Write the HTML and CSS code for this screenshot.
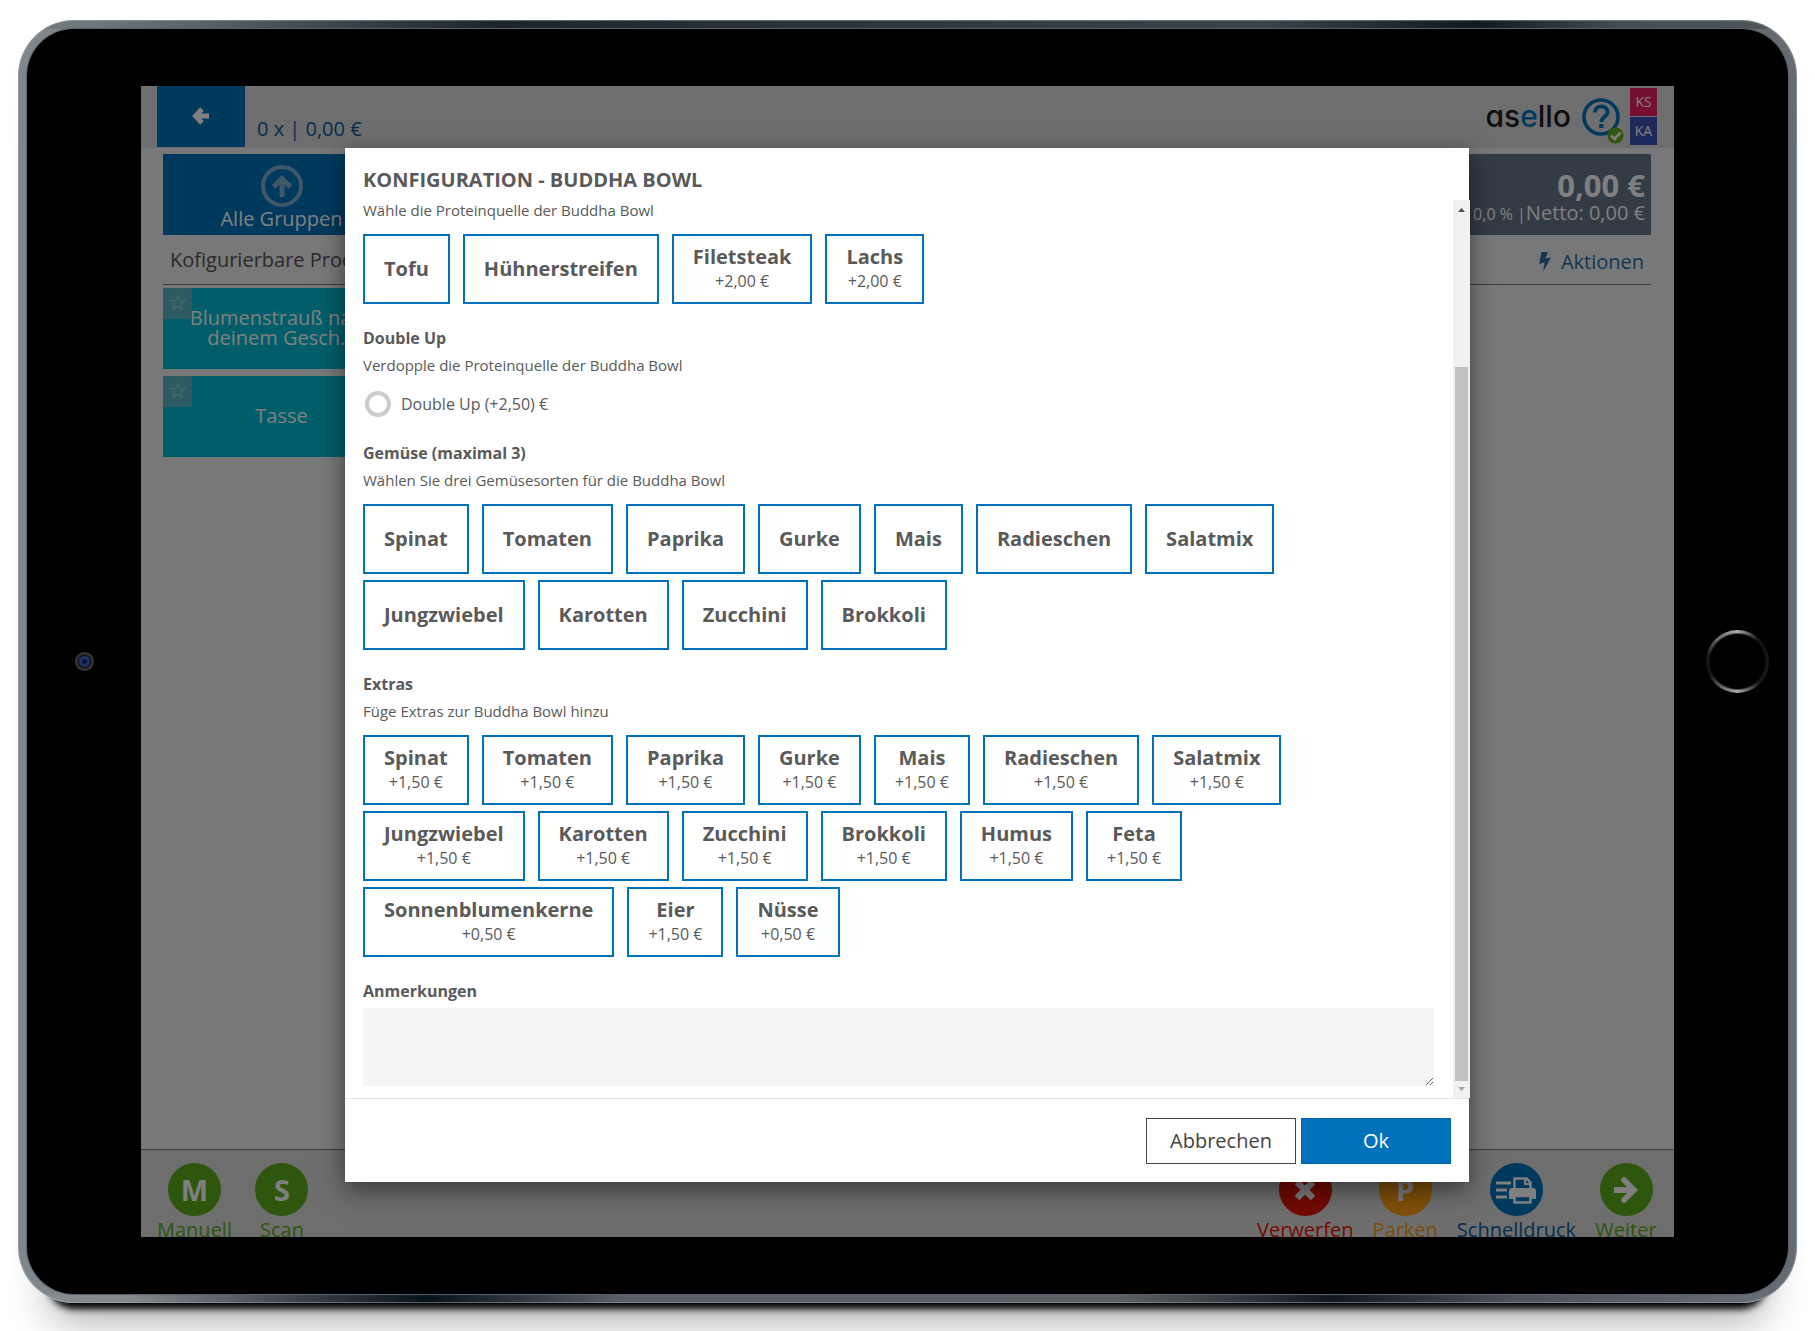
FILE: index.html
```html
<!DOCTYPE html>
<html lang="de">
<head>
    <meta charset="UTF-8">
    <title>asello - Konfiguration</title>
    <link rel="stylesheet" href="styles.css">
</head>
<body>
<div class="device">
    <div class="bezel">
        <div class="camera"></div>
        <div class="screen">
            <header class="topbar">
                <button class="back" aria-label="Zurück">
                    <svg width="18" height="18" viewBox="0 0 18 18"><path d="M10 2 3.500 9l6.500 7M4 9h13" fill="none" stroke="#fff" stroke-width="5"/></svg>
                </button>
                <span class="cart">0 x | 0,00 €</span>
                <div class="logo">as<span>e</span>llo</div>
                <button class="help" aria-label="Hilfe">
                    <svg width="42" height="46" viewBox="0 0 42 46">
                        <circle cx="19" cy="19" r="17" fill="none" stroke="#0072bc" stroke-width="3.6"/>
                        <path d="M13 14.500c0-8 12.500-8 12.500-.5 0 5-6.200 4.500-6.200 10" fill="none" stroke="#0072bc" stroke-width="3.800"/>
                        <rect x="17.200" y="26" width="4.200" height="4" fill="#0072bc"/>
                        <circle cx="33.500" cy="37.500" r="8" fill="#5eac1a"/>
                        <path d="m29 37.500 3.500 3.500 6-6.500" fill="none" stroke="#fff" stroke-width="2.800"/>
                    </svg>
                </button>
                <div class="users">
                    <span class="user ks">KS</span>
                    <span class="user ka">KA</span>
                </div>
            </header>
            <main class="main">
                <section class="products">
                    <button class="tile group">
                        <svg width="42" height="42" viewBox="0 0 42 42">
                            <circle cx="21" cy="21" r="19" fill="none" stroke="#7fb0d0" stroke-width="4"/>
                            <path d="M12.500 22 21 13.500l8.500 8.500M21 15v17" fill="none" stroke="#7fb0d0" stroke-width="5"/>
                        </svg>
                        Alle Gruppen
                    </button>
                    <h2 class="bar">Kofigurierbare Produkte</h2>
                    <button class="tile"><span class="star">☆</span>Blumenstrauß nach<br>deinem Gesch...</button>
                    <button class="tile"><span class="star">☆</span>Tasse</button>
                </section>
                <section class="receipt">
                    <div class="total">
                        <strong>0,00 €</strong>
                        <div><small>0,0 % |</small>Netto: 0,00 €</div>
                    </div>
                    <div class="bar actions">
                        <svg width="12" height="20" viewBox="0 0 12 20"><path d="M2.500 0H9L6.500 6.500 12 5.500 4 20l1.500-9.500L0 12z" fill="#2a6fa8"/></svg>
                        <a href="#">Aktionen</a>
                    </div>
                </section>
            </main>
            <footer class="toolbar">
                <button class="tool green"><span class="circle">M</span>Manuell</button>
                <button class="tool green"><span class="circle">S</span>Scan</button>
                <span class="space"></span>
                <button class="tool red"><span class="circle"><svg width="24" height="24" viewBox="0 0 24 24"><path d="m4 4 16 16M20 4 4 20" stroke="#fff" stroke-width="6.500"/></svg></span>Verwerfen</button>
                <button class="tool orange"><span class="circle">P</span>Parken</button>
                <button class="tool blue"><span class="circle">
                    <svg width="42" height="28" viewBox="0 0 42 28">
                        <path d="M1 7h15M1 14h11M1 21h11" stroke="#fff" stroke-width="3"/>
                        <path d="M19.500 13V2.500h12l4 4V13" fill="none" stroke="#fff" stroke-width="2.500"/>
                        <path d="M30 2v6h6" fill="none" stroke="#fff" stroke-width="2"/>
                        <path d="M17 12h21q3 0 3 3v8H14v-8q0-3 3-3z" fill="#fff"/>
                        <path d="M19.500 20h16v6.500h-16z" fill="#0072bc" stroke="#fff" stroke-width="2.500"/>
                    </svg></span>Schnelldruck</button>
                <button class="tool green"><span class="circle"><svg width="26" height="26" viewBox="0 0 26 26"><path d="m11 3 10 10-10 10" fill="none" stroke="#fff" stroke-width="5.500" stroke-linecap="round"/><path d="M1 13h19" stroke="#fff" stroke-width="6"/></svg></span>Weiter</button>
            </footer>

            <div class="overlay">
                <form class="modal">
                    <h1>Konfiguration - Buddha Bowl</h1>
                    <div class="scroll">
                        <div class="content">
                            <fieldset>
                                <p>Wähle die Proteinquelle der Buddha Bowl</p>
                                <div class="options">
                                    <button type="button">Tofu</button>
                                    <button type="button">Hühnerstreifen</button>
                                    <button type="button">Filetsteak<small>+2,00 €</small></button>
                                    <button type="button">Lachs<small>+2,00 €</small></button>
                                </div>
                            </fieldset>
                            <fieldset>
                                <h3>Double Up</h3>
                                <p>Verdopple die Proteinquelle der Buddha Bowl</p>
                                <label class="radio"><input type="radio" name="double">Double Up (+2,50) €</label>
                            </fieldset>
                            <fieldset>
                                <h3>Gemüse (maximal 3)</h3>
                                <p>Wählen Sie drei Gemüsesorten für die Buddha Bowl</p>
                                <div class="options">
                                    <button type="button">Spinat</button>
                                    <button type="button">Tomaten</button>
                                    <button type="button">Paprika</button>
                                    <button type="button">Gurke</button>
                                    <button type="button">Mais</button>
                                    <button type="button">Radieschen</button>
                                    <button type="button">Salatmix</button>
                                    <button type="button">Jungzwiebel</button>
                                    <button type="button">Karotten</button>
                                    <button type="button">Zucchini</button>
                                    <button type="button">Brokkoli</button>
                                </div>
                            </fieldset>
                            <fieldset>
                                <h3>Extras</h3>
                                <p>Füge Extras zur Buddha Bowl hinzu</p>
                                <div class="options">
                                    <button type="button">Spinat<small>+1,50 €</small></button>
                                    <button type="button">Tomaten<small>+1,50 €</small></button>
                                    <button type="button">Paprika<small>+1,50 €</small></button>
                                    <button type="button">Gurke<small>+1,50 €</small></button>
                                    <button type="button">Mais<small>+1,50 €</small></button>
                                    <button type="button">Radieschen<small>+1,50 €</small></button>
                                    <button type="button">Salatmix<small>+1,50 €</small></button>
                                    <button type="button">Jungzwiebel<small>+1,50 €</small></button>
                                    <button type="button">Karotten<small>+1,50 €</small></button>
                                    <button type="button">Zucchini<small>+1,50 €</small></button>
                                    <button type="button">Brokkoli<small>+1,50 €</small></button>
                                    <button type="button">Humus<small>+1,50 €</small></button>
                                    <button type="button">Feta<small>+1,50 €</small></button>
                                    <button type="button">Sonnenblumenkerne<small>+0,50 €</small></button>
                                    <button type="button">Eier<small>+1,50 €</small></button>
                                    <button type="button">Nüsse<small>+0,50 €</small></button>
                                </div>
                            </fieldset>
                            <label class="notes-label" for="notes">Anmerkungen</label>
                            <textarea id="notes" class="notes"></textarea>
                        </div>
                        <div class="scrollbar">
                            <svg width="17" height="17" viewBox="0 0 17 17"><path d="M5 12h7L8.500 8z" fill="#505050"/></svg>
                            <div class="track"><div class="thumb"></div></div>
                            <svg width="17" height="17" viewBox="0 0 17 17"><path d="M5 6h7l-3.500 4z" fill="#a3a3a3"/></svg>
                        </div>
                    </div>
                    <div class="modal-footer">
                        <button type="button" class="btn">Abbrechen</button>
                        <button type="button" class="btn primary">Ok</button>
                    </div>
                </form>
            </div>
        </div>
        <div class="home"></div>
    </div>
</div>
</body>
</html>
```
FILE: styles.css
```css
*{
    margin: 0;
    padding: 0;
    box-sizing: border-box;
}
body{
    min-height: 100vh;
    padding: 20px 18px 28px;
    display: flex;
    font-family: "Open Sans", "Noto Sans", sans-serif;
    font-size: 20px;
    font-weight: 400;
    line-height: 24px;
    background: #fff;
    overflow: hidden;
}
button{
    font: inherit;
    border: none;
    background: none;
    cursor: pointer;
}
/* tablet */
.device{
    flex: 1;
    display: flex;
    padding: 9px;
    border-radius: 56px;
    background:
        linear-gradient(90deg, #70787c 4%, #1c2428 27%, #30383c 50%, #3c4448 70%, #10181c 82%, #464d51 90%, #50575b) top / 100% 9px no-repeat,
        linear-gradient(90deg, #858b8f 6%, #3a4148 16%, #06121a 23%, #5a6068 34%, #5a6064 62%, #10181e 74%, #4c5258 84%, #6a7078) bottom / 100% 9px no-repeat,
        linear-gradient(90deg, #80878c 50%, #666b71 50%);
    box-shadow: inset 0 0 1px 1px rgba(170, 176, 180, .5), 0 36px 7px -30px #000, 0 50px 40px -30px rgba(0, 0, 0, .3);
}
.bezel{
    flex: 1;
    display: grid;
    grid-template-columns: 114px 1fr 114px;
    align-items: center;
    justify-items: center;
    padding: 57px 0;
    border-radius: 47px;
    background: #000;
    box-shadow: 0 0 1px 1px #5a626a;
}
.camera{
    width: 19px;
    height: 19px;
    border-radius: 50%;
    background: radial-gradient(circle, #0a1020 10%, #203c80 30%, #15151a 45%, #333 60%, #555);
}
.home{
    width: 63px;
    height: 63px;
    margin-left: 12px;
    border-radius: 50%;
    background: radial-gradient(circle, #000 27px, transparent 29px), conic-gradient(#aaa, #111 12%, #1a1a1a 38%, #aaa 50%, #777 57%, #111 68%, #1a1a1a 78%, #666 88%, #aaa);
}
.screen{
    position: relative;
    align-self: stretch;
    justify-self: stretch;
    display: flex;
    flex-direction: column;
    overflow: hidden;
    background: #f0f0f0;
}
.topbar{
    display: flex;
    height: 62px;
    padding: 0 17px 0 16px;
    background: #dcdcdc;
}
.back{
    width: 88px;
    height: 61px;
    padding-top: 2px;
    background: #0072bc;
}
.cart{
    flex: 1;
    padding: 31px 12px 0;
    color: #0b5a9c;
}
.logo{
    padding: 15px 11px 0 0;
    font: 500 30px/30px Inter, sans-serif;
    font-feature-settings: "cv11";
    color: #1c1c1c;
}
.logo span{
    color: #0072bc;
}
.help{
    height: 60px;
    padding-top: 10px;
    margin-right: 6px;
    line-height: 0;
}
.users{
    display: flex;
    flex-direction: column;
    gap: 1px;
    padding-top: 2px;
}
.user{
    width: 27px;
    height: 28px;
    font-size: 14px;
    line-height: 28px;
    text-align: center;
    color: #fff;
}
.ks{
    background: #e91e63;
}
.ka{
    background: #3f51b5;
}
.main{
    flex: 1;
    display: flex;
    padding: 6px 23px 0 22px;
}
.products{
    width: 237px;
}
.tile{
    position: relative;
    display: flex;
    flex-direction: column;
    align-items: center;
    justify-content: center;
    width: 100%;
    height: 81px;
    margin-bottom: 7px;
    padding-bottom: 2px;
    line-height: 20px;
    color: #fff;
    background: #00bcd4;
}
.group{
    margin: 0;
    padding: 6px 0 0;
    line-height: 24px;
    background: #0072bc;
}
.star{
    position: absolute;
    top: 0;
    left: 0;
    width: 29px;
    height: 31px;
    font: bold 22px/30px "DejaVu Sans", sans-serif;
    color: #b4dce4;
    background: #5cb4c2;
}
.bar{
    height: 50px;
    margin-bottom: 3px;
    padding: 0 7px;
    border-bottom: 1px solid #66768a;
    font-size: 20px;
    font-weight: 400;
    line-height: 50px;
    white-space: nowrap;
    overflow: hidden;
    color: #555;
}
.receipt{
    flex: 1;
}
.total{
    height: 81px;
    padding: 15px 6px 0;
    text-align: right;
    color: #fff;
    background: #66768a;
}
.total strong{
    display: block;
    font-size: 31px;
    font-weight: 700;
    line-height: 32px;
}
.total small{
    font-size: 16px;
}
.actions{
    display: flex;
    align-items: center;
    justify-content: flex-end;
    gap: 10px;
    padding-top: 4px;
}
.actions a{
    color: #2a6fa8;
    text-decoration: none;
}
.toolbar{
    display: flex;
    align-items: flex-start;
    gap: 19px;
    height: 88px;
    padding: 13px 17px 0 16px;
    border-top: 1px solid #66768a;
    background: #dcdcdc;
}
.tool{
    display: flex;
    flex-direction: column;
    align-items: center;
    min-width: 62px;
}
.circle{
    display: flex;
    align-items: center;
    justify-content: center;
    width: 53px;
    height: 53px;
    margin-bottom: 2px;
    border-radius: 50%;
    font-size: 29px;
    font-weight: 700;
    color: #fff;
}
.space{
    flex: 1;
}
.green{
    color: #5eac1a;
}
.green .circle{
    background: #5eac1a;
}
.red{
    color: #e61400;
}
.red .circle{
    background: #e61400;
}
.orange{
    color: #f09c14;
}
.orange .circle{
    background: #ffa010;
}
.blue{
    color: #0b5a9c;
}
.blue .circle{
    background: #0072bc;
}
/* dialog */
.overlay{
    position: absolute;
    top: 0;
    right: 0;
    bottom: 0;
    left: 0;
    display: flex;
    padding: 62px 205px 55px 204px;
    background: rgba(0, 0, 0, .5);
}
.modal{
    flex: 1;
    display: flex;
    flex-direction: column;
    min-width: 0;
    color: #5a5a5a;
    background: #fff;
    box-shadow: 0 8px 24px rgba(0, 0, 0, .5);
}
.modal h1{
    height: 52px;
    padding: 19px 18px 0;
    font-size: 20px;
    font-weight: 700;
    line-height: 26px;
    text-transform: uppercase;
}
.scroll{
    flex: 1;
    display: flex;
    min-height: 0;
    margin-right: -1px;
}
.content{
    flex: 1;
    padding: 0 19px 0 18px;
    overflow: hidden;
}
fieldset{
    border: none;
    margin-bottom: 22px;
}
.content h3, .notes-label{
    display: block;
    font-size: 16px;
    font-weight: 700;
    line-height: 24px;
}
.content p{
    padding: 5px 0 14px;
    font-size: 15px;
    line-height: 20px;
}
.content fieldset:first-child p{
    padding-top: 0;
}
.options{
    display: flex;
    flex-wrap: wrap;
    gap: 6px 13px;
}
.options button{
    height: 70px;
    padding: 0 19px;
    border: 2px solid #0072bc;
    font-weight: 700;
    line-height: 26px;
    color: #5a5a5a;
    background: #fff;
}
.options small{
    display: block;
    padding-bottom: 3px;
    font-size: 16px;
    font-weight: 400;
    line-height: 22px;
}
.radio{
    display: flex;
    align-items: center;
    gap: 10px;
    height: 30px;
    padding-left: 2px;
    font-size: 16px;
}
.radio input{
    appearance: none;
    width: 26px;
    height: 26px;
    border: 4px solid #ccc;
    border-radius: 50%;
}
.notes{
    display: block;
    width: 100%;
    height: 78px;
    margin-top: 5px;
    border: none;
    background: #f5f5f5;
    resize: vertical;
}
.scrollbar{
    display: flex;
    flex-direction: column;
    width: 17px;
    background: #f1f1f1;
}
.track{
    flex: 1;
    display: flex;
    flex-direction: column;
    padding: 0 2px;
}
.track::before{
    content: "";
    flex: 25;
}
.thumb{
    flex: 119;
    background: #c1c1c1;
}
.modal-footer{
    display: flex;
    justify-content: flex-end;
    gap: 5px;
    padding: 19px 18px 18px;
    border-top: 1px solid #e3e3e3;
}
.btn{
    width: 150px;
    height: 46px;
    border: 1px solid #444;
    color: #444;
    background: #fff;
}
.primary{
    border-color: #0068ac;
    color: #fff;
    background: #0072bc;
}
```
